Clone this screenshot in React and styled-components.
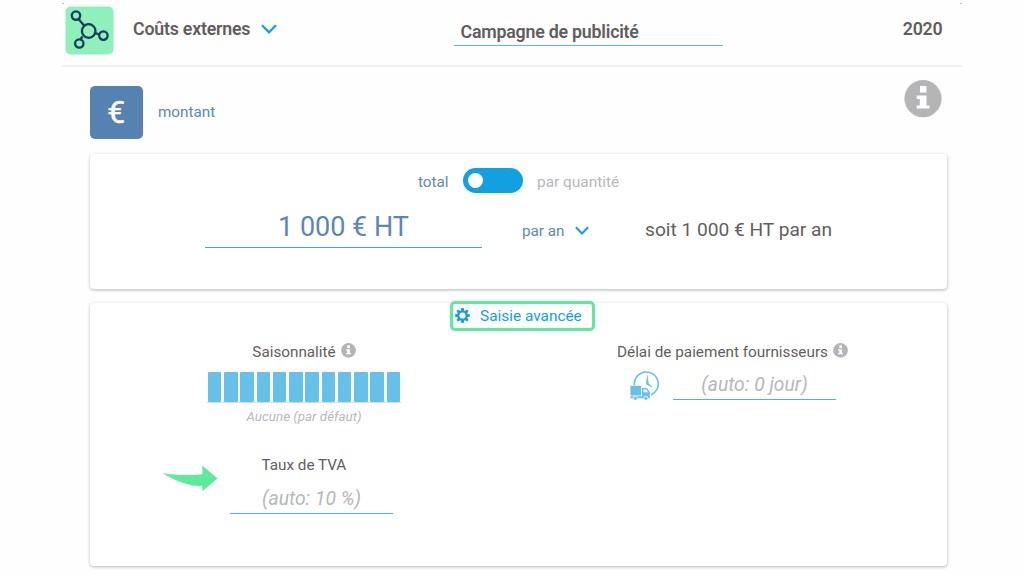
import React from "react";
import styled, { createGlobalStyle } from "styled-components";

const c = {
  text: "#625d5d",
  steel: "#5b87b8",
  azure: "#12a0e0",
  muted: "#b7b7b8",
  sky: "#66c0e8",
  mint: "#5dea9c",
};

const Global = createGlobalStyle`
  * { box-sizing: border-box; }
  body { margin: 0; background: #fefefe; font-family: Roboto, "Liberation Sans", sans-serif; color: ${c.text}; overflow: hidden; }
  svg { display: block; flex: none; }
`;

const Page = styled.main`
  position: relative;
  width: 900px;
  height: 576px;
  margin-left: 62px;
`;

const Corner = styled.i`
  position: absolute;
  top: 3px;
  ${(p) => p.$side}: 0;
  width: 2px;
  height: 1px;
  background: #bbb;
`;

const Header = styled.header`
  display: grid;
  grid-template-columns: 68px 324px 1fr auto;
  height: 67px;
  padding: 6px 19.5px 0 3px;
  border-bottom: 2px solid #f1f1f2;
`;

const Label = styled.span`
  display: block;
  white-space: nowrap;
  font-size: ${(p) => p.$size || 15.25}px;
  line-height: ${(p) => p.$line || 20}px;
  font-weight: ${(p) => p.$weight || 400};
  font-style: ${(p) => (p.$italic ? "italic" : "normal")};
  color: ${(p) => p.$color || c.text};
`;

const Heading = styled(Label)`
  font-size: 17.8px;
  font-weight: 600;
  letter-spacing: -0.22px;
`;

const Euro = styled.span`
  font-size: 32px;
  line-height: 34px;
  color: #fff;
  -webkit-text-stroke: 0.4px #fff;
`;

const Category = styled.div`
  display: flex;
  align-items: center;
  height: 46px;
  gap: 11px;
`;

const CampaignField = styled.div`
  width: 269px;
  height: 40px;
  margin-left: -3px;
  padding: 16px 0 0 6.5px;
  border-bottom: 1px solid #5bb9e6;
`;

const Year = styled.div`
  padding-top: 13px;
`;

const Amount = styled.section`
  display: flex;
  height: 86.5px;
  padding: 18.5px 20px 0 27.5px;
`;

const EuroTile = styled.div`
  display: grid;
  place-items: center;
  width: 53.5px;
  height: 53.5px;
  margin-right: 15px;
  border-radius: 5px;
  background: #5582b1;
`;

const AmountLabel = styled.div`
  flex: 1;
  padding-top: 16px;
`;

const InfoSlot = styled.div`
  margin-top: -6px;
`;

const Card = styled.section`
  width: 857.5px;
  height: ${(p) => p.$height}px;
  margin: 0 0 14px 27.5px;
  border-radius: 4px;
  background: #fff;
  box-shadow: 0 1px 3px rgba(0, 0, 0, 0.24), 1px 1px 5px rgba(0, 0, 0, 0.07);
`;

const ModeRow = styled.div`
  display: flex;
  gap: 15px;
  height: 54px;
  padding: 14.5px 0 0 328.5px;
`;

const ModeLabel = styled.div`
  width: ${(p) => p.$width}px;
  padding-top: 4px;
`;

const Toggle = styled.div`
  width: 59.5px;
  height: 25px;
  margin-right: -0.5px;
  padding: 5px;
  border-radius: 13px;
  background: ${c.azure};

  &::before {
    content: "";
    display: block;
    width: 15px;
    height: 15px;
    border-radius: 50%;
    background: #fff;
  }
`;

const ValueRow = styled.div`
  display: flex;
  padding-left: 115.5px;
`;

const AmountInput = styled.div`
  display: flex;
  justify-content: center;
  width: 277px;
  height: 40.5px;
  padding-top: 4px;
  border-bottom: 1px solid #3fa9db;
`;

const Period = styled.div`
  display: flex;
  align-items: center;
  gap: 10.5px;
  width: 123px;
  height: 20px;
  margin: 13.5px 0 0 40px;
`;

const Summary = styled.div`
  padding-top: 12.5px;
`;

const AdvancedCard = styled(Card)`
  display: grid;
  grid-template-columns: 428px 1fr;
  grid-template-rows: 38px 113.5px 1fr;
`;

const AdvancedButton = styled.div`
  grid-column: 1 / -1;
  display: flex;
  align-items: center;
  gap: 10px;
  width: 145px;
  height: 29.5px;
  margin: -2px 0 0 360.5px;
  padding-left: 2px;
  border: 3px solid ${c.mint};
  border-radius: 5px;
  background: #fff;
`;

const Stack = styled.div`
  display: flex;
  flex-direction: column;
  align-items: center;
`;

const Season = styled(Stack)`
  width: 429px;
`;

const FieldTitle = styled.div`
  display: flex;
  align-items: flex-start;
  gap: 5px;
  height: 20px;
  padding-top: 0.5px;
`;

const SmallInfo = styled.div`
  padding-top: 1px;
`;

const Bars = styled.div`
  display: grid;
  grid-template-columns: repeat(12, 1fr);
  gap: 2.8px;
  width: 194px;
  height: 31px;
  margin: 11px 0 4px;
  padding: 0 1px;
  border-bottom: 1px solid #d9d9db;
`;

const Bar = styled.i`
  height: 29.5px;
  border-radius: 1px;
  background: ${c.sky};
`;

const Payment = styled.div`
  padding-left: 99.5px;
`;

const PaymentRow = styled.div`
  display: flex;
  gap: 13.5px;
  padding: 10px 0 0 12.5px;
`;

const TruckSlot = styled.div`
  padding-top: 0;
`;

const AutoField = styled.div`
  display: flex;
  justify-content: center;
  width: 163px;
  height: 29px;
  padding-top: 4px;
  border-bottom: 1px solid #4db3e2;
`;

const Vat = styled.div`
  display: flex;
  align-items: flex-start;
  padding-left: 72px;
`;

const ArrowSlot = styled.div`
  padding-top: 10.5px;
`;

const VatField = styled.div`
  margin-left: 12.5px;
`;

const VatLabel = styled.div`
  padding: 0.5px 0 9.5px 31.5px;
`;

const Network = () => (
  <svg width="51" height="49" viewBox="0 0 51 49">
    <rect x=".5" y=".5" width="48" height="48" rx="5" fill="#90f0ba" />
    <g fill="none" stroke="#173c5e" strokeWidth="2.3">
      <path d="M13.5 13l6 7M17.5 30.5l-2.5 3.5M30 27l4 1.3" />
      <circle cx="11" cy="9.6" r="4.2" />
      <circle cx="23.7" cy="25" r="6.8" />
      <circle cx="38.4" cy="29.6" r="4.2" />
      <circle cx="14.3" cy="37.5" r="4.2" />
    </g>
  </svg>
);

const Chevron = ({ w, h }) => (
  <svg width={w} height={h} viewBox="0 0 16 11">
    <path d="M1 1.2L8 8.4L15 1.2" fill="none" stroke={c.azure} strokeWidth="2.3" />
  </svg>
);

const Info = ({ size }) => (
  <svg width={size} height={size} viewBox="0 0 38 38">
    <circle cx="19" cy="18.7" r="18.6" fill="#b5b5b7" />
    <path d="M16 6h6.4v6.4H16zM12.7 15.6h9.8v9.8h3v3.2H12.7v-3.2h3.1v-6.4h-3.1z" fill="#fff" />
  </svg>
);

const Gear = () => (
  <svg width="15" height="15" viewBox="-7.5 -7.5 15 15">
    <g fill={c.azure}>
      {[0, 45, 90, 135].map((a) => (
        <path key={a} d="M-1.2 -7.4H1.2L1.8 -4V4L1.2 7.4H-1.2L-1.8 4V-4Z" transform={`rotate(${a})`} />
      ))}
      <circle r="5.3" />
    </g>
    <circle r="3.1" fill="#fff" />
  </svg>
);

const Truck = () => (
  <svg width="30" height="30" viewBox="0 0 30 30">
    <path d="M4.3 14A12 12 0 1 1 21 24" fill="none" stroke={c.sky} strokeWidth="1.6" />
    <path d="M17.4 4.5L18.4 12.3L22 16L16 13.2Z" fill={c.sky} stroke={c.sky} strokeWidth=".5" />
    <path d="M.4 14.8h10.8v9.6H.4zM.4 25.2h19.5v2H.4zM12 17h4.8l3 4v4.2H12z" fill={c.sky} />
    <path d="M13.5 18.4h2.7l1.9 2.8h-4.6z" fill="#fff" />
    <circle cx="5.3" cy="27.3" r="2.1" fill={c.sky} stroke="#fff" strokeWidth=".8" />
    <circle cx="15.8" cy="27.3" r="2.1" fill={c.sky} stroke="#fff" strokeWidth=".8" />
  </svg>
);

const Arrow = () => (
  <svg width="56" height="28" viewBox="0 0 56 28">
    <path d="M.3 8C13 10.4 27 10.600 40.300 9.200V.4L55.500 13.400L40.300 26.200V20.800C27 21.600 14 16.100 .3 8Z" fill={c.mint} />
  </svg>
);

export default function App() {
  return (
    <Page>
      <Global />
      <Corner $side="left" />
      <Corner $side="right" />
      <Header>
        <Network />
        <Category>
          <Heading>Coûts externes</Heading>
          <Chevron w={16} h={11} />
        </Category>
        <CampaignField>
          <Heading>Campagne de publicité</Heading>
        </CampaignField>
        <Year>
          <Heading>2020</Heading>
        </Year>
      </Header>
      <Amount>
        <EuroTile>
          <Euro>€</Euro>
        </EuroTile>
        <AmountLabel>
          <Label $color={c.steel}>montant</Label>
        </AmountLabel>
        <InfoSlot>
          <Info size={38} />
        </InfoSlot>
      </Amount>
      <Card $height={135.5}>
        <ModeRow>
          <ModeLabel $width={30}><Label $color={c.steel}>total</Label></ModeLabel>
          <Toggle />
          <ModeLabel $width={84}><Label $size={15.4} $color={c.muted}>par quantité</Label></ModeLabel>
        </ModeRow>
        <ValueRow>
          <AmountInput>
            <Label $size={27} $line={30} $color={c.steel}>1 000 € HT</Label>
          </AmountInput>
          <Period>
            <Label $color={c.steel}>par an</Label>
            <Chevron w={14} h={10} />
          </Period>
          <Summary>
            <Label $size={19.15}>soit 1 000 € HT par an</Label>
          </Summary>
        </ValueRow>
      </Card>
      <AdvancedCard $height={263}>
        <AdvancedButton>
          <Gear />
          <Label $size={15.4} $color={c.azure}>Saisie avancée</Label>
        </AdvancedButton>
        <Season>
          <FieldTitle>
            <Label>Saisonnalité</Label>
            <SmallInfo><Info size={15} /></SmallInfo>
          </FieldTitle>
          <Bars>
            {Array.from({ length: 12 }, (_, i) => <Bar key={i} />)}
          </Bars>
          <Label $size={13.4} $italic $color={c.muted}>Aucune (par défaut)</Label>
        </Season>
        <Payment>
          <FieldTitle>
            <Label $size={15.3}>Délai de paiement fournisseurs</Label>
            <SmallInfo><Info size={15} /></SmallInfo>
          </FieldTitle>
          <PaymentRow>
            <TruckSlot><Truck /></TruckSlot>
            <AutoField>
              <Label $size={19.3} $italic $color={c.muted}>(auto: 0 jour)</Label>
            </AutoField>
          </PaymentRow>
        </Payment>
        <Vat>
          <ArrowSlot><Arrow /></ArrowSlot>
          <VatField>
            <VatLabel><Label>Taux de TVA</Label></VatLabel>
            <AutoField>
              <Label $size={19.3} $italic $color={c.muted}>(auto: 10 %)</Label>
            </AutoField>
          </VatField>
        </Vat>
      </AdvancedCard>
    </Page>
  );
}
